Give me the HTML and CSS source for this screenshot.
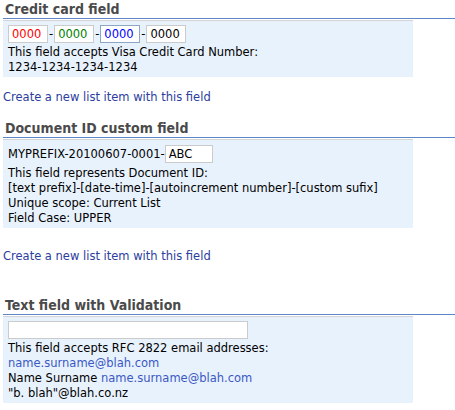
FILE: index.html
```html
<!DOCTYPE html>
<html lang="en">
<head>
    <meta charset="UTF-8">
    <title>Custom fields</title>
    <link rel="stylesheet" href="styles.css">
</head>
<body>
    <div class="section">
        <h3 class="title">Credit card field</h3>
        <div class="field">
            <div class="cc-row">
                <input type="text" class="cc red" value="0000"><span class="dash">-</span><input type="text" class="cc green" value="0000"><span class="dash">-</span><input type="text" class="cc blue focus" value="0000"><span class="dash">-</span><input type="text" class="cc" value="0000">
            </div>
            <div class="desc">This field accepts Visa Credit Card Number:<br>1234-1234-1234-1234</div>
        </div>
    </div>
    <a class="new-item first" href="#">Create a new list item with this field</a>

    <div class="section">
        <h3 class="title">Document ID custom field</h3>
        <div class="field doc">
            <div class="doc-row">MYPREFIX-20100607-0001-<input type="text" class="suffix" value="ABC"></div>
            <div class="desc">This field represents Document ID:<br>[text prefix]-[date-time]-[autoincrement number]-[custom sufix]<br>Unique scope: Current List<br>Field Case: UPPER</div>
        </div>
    </div>
    <a class="new-item second" href="#">Create a new list item with this field</a>

    <div class="section">
        <h3 class="title">Text field with Validation</h3>
        <div class="field">
            <input type="text" class="wide">
            <div class="desc">This field accepts RFC 2822 email addresses:<br><a href="#">name.surname@blah.com</a><br>Name Surname <a href="#">name.surname@blah.com</a><br>"b. blah"@blah.co.nz</div>
        </div>
    </div>
</body>
</html>
```

FILE: styles.css
```css
body { margin: 0; font-family: "DejaVu Sans", Verdana, sans-serif; font-size: 11.5px; color: #000; background: #fff; }
.title { margin: 0 0 0 3px; padding: 1px 0 1px 2px; font-size: 14px; line-height: 16px; font-family: "DejaVu Sans Condensed", "DejaVu Sans", sans-serif; font-weight: bold; color: #4a4a4a; border-bottom: 1px solid #5b87c7; }
.field { margin: 1px 0 0 3px; width: 410px; box-sizing: border-box; background: #e8f2fd; border-top: 1px solid #d4d4d4; padding: 4px 6px 2px 5px; line-height: 15px; }
.cc-row { display: flex; align-items: center; }
input[type="text"] { display: block; font-family: "DejaVu Sans", Verdana, sans-serif; font-size: 11.5px; border: 1px solid #cbcbcb; background: #fff; margin: 0; padding: 0 3px; box-sizing: border-box; height: 18px; outline: none; }
.cc { width: 40px; }
.cc.red { color: #f00; }
.cc.green { color: #008000; }
.cc.blue { color: #00f; }
.cc.focus { border-color: #8ea6c6; }
.dash { padding: 0 1px; }
.desc { margin-top: 2px; }
.doc-row { display: flex; align-items: center; padding-top: 1px; }
.field.doc .desc { margin-top: 3px; }
.suffix { width: 48px; margin-left: 1px; }
.wide { width: 240px; margin-left: 1px; }
.desc a { color: #3b58c4; text-decoration: none; }
.new-item { display: block; margin-left: 3px; color: #2b3d9e; text-decoration: none; line-height: 15px; }
.new-item.first { margin-top: 13px; margin-bottom: 14px; }
.new-item.second { margin-top: 21px; margin-bottom: 32px; }
```
